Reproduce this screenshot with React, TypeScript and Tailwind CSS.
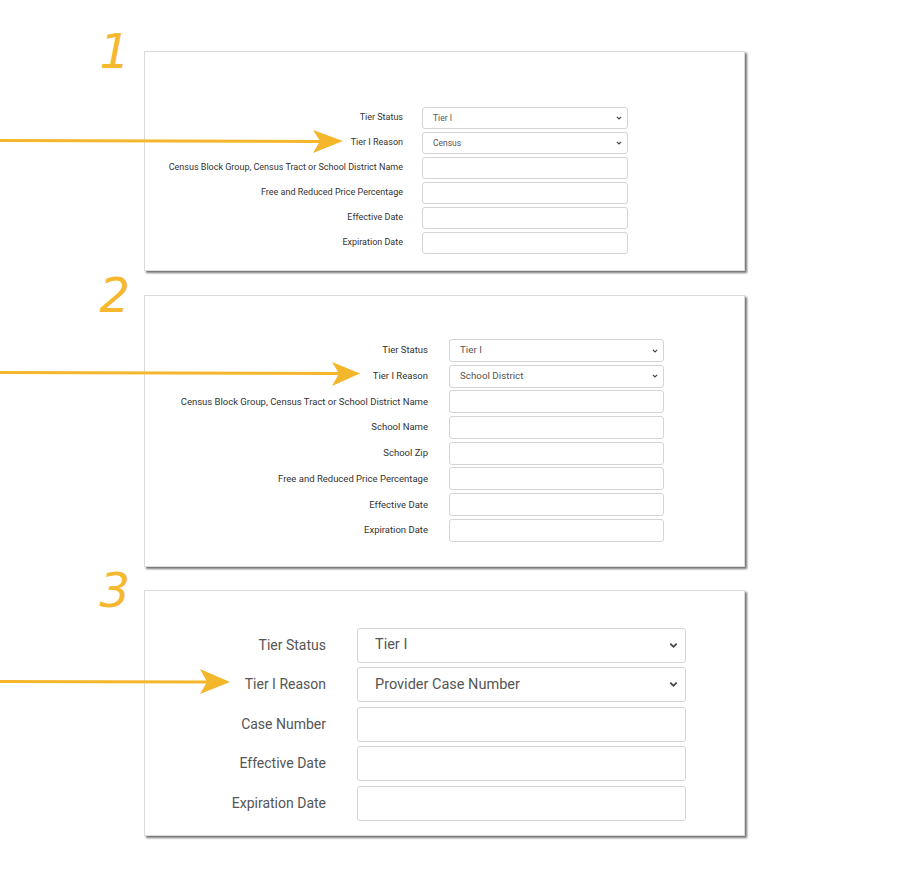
import React from "react";

type Row = { label: string; value?: string };

type PanelStyle = {
  section: string;
  panel: string;
  list: string;
  row: string;
  label: string;
  field: string;
  text: string;
  chevron: number;
};

const panels: { num: string; rows: Row[]; s: PanelStyle }[] = [
  {
    num: "1",
    rows: [
      { label: "Tier Status", value: "Tier I" },
      { label: "Tier I Reason", value: "Census" },
      { label: "Census Block Group, Census Tract or School District Name" },
      { label: "Free and Reduced Price Percentage" },
      { label: "Effective Date" },
      { label: "Expiration Date" },
    ],
    s: {
      section: "",
      panel: "pt-[55px] pb-[16px]",
      list: "gap-[3px]",
      row: "h-[22px] gap-[19px]",
      label: "w-[258px] text-[9px] text-[#333]",
      field: "w-[206px] pl-[10px] pr-[5px]",
      text: "text-[8.5px] text-[#555]",
      chevron: 6,
    },
  },
  {
    num: "2",
    rows: [
      { label: "Tier Status", value: "Tier I" },
      { label: "Tier I Reason", value: "School District" },
      { label: "Census Block Group, Census Tract or School District Name" },
      { label: "School Name" },
      { label: "School Zip" },
      { label: "Free and Reduced Price Percentage" },
      { label: "Effective Date" },
      { label: "Expiration Date" },
    ],
    s: {
      section: "mt-[24px]",
      panel: "pt-[43px] pb-[24px]",
      list: "gap-[2.7px]",
      row: "h-[23px] gap-[21px]",
      label: "w-[283px] text-[9.5px] text-[#333]",
      field: "w-[215px] pl-[10px] pr-[5px]",
      text: "text-[9.8px] text-[#555]",
      chevron: 6,
    },
  },
  {
    num: "3",
    rows: [
      { label: "Tier Status", value: "Tier I" },
      { label: "Tier I Reason", value: "Provider Case Number" },
      { label: "Case Number" },
      { label: "Effective Date" },
      { label: "Expiration Date" },
    ],
    s: {
      section: "mt-[23px]",
      panel: "pt-[37px] pb-[14px]",
      list: "gap-[4.5px]",
      row: "h-[35px] gap-[31px]",
      label: "w-[181px] text-[14px] text-[#555]",
      field: "w-[329px] pl-[17px] pr-[7px]",
      text: "text-[14.5px] text-[#555]",
      chevron: 9,
    },
  },
];

function Chevron({ size }: { size: number }) {
  return (
    <svg width={size} height={size} viewBox="0 0 10 10" className="shrink-0">
      <polyline points="1.5,3 5,6.5 8.5,3" fill="none" stroke="#444" strokeWidth="2" />
    </svg>
  );
}

function FormPanel({ num, rows, s }: { num: string; rows: Row[]; s: PanelStyle }) {
  return (
    <div className={`flex items-start ${s.section}`}>
      {/* hand-written step number */}
      <div className="w-[144px] shrink-0 flex justify-end pr-[14px]">
        <span className="-mt-[24px] text-[48px] leading-none italic font-medium text-[#f5b82e] font-['DejaVu_Sans',sans-serif]">
          {num}
        </span>
      </div>
      <div
        className={`w-[601px] bg-white border border-[#dadada] shadow-[2px_2px_2px_rgba(0,0,0,0.55)] ${s.panel}`}
      >
        <div className={`flex flex-col ${s.list}`}>
          {rows.map((r) => (
            <div key={r.label} className={`flex items-center ${s.row}`}>
              <div className={`text-right whitespace-nowrap ${s.label}`}>{r.label}</div>
              {r.value !== undefined ? (
                <div
                  className={`h-full flex items-center justify-between border border-[#d4d4d4] rounded-[3px] bg-white ${s.field}`}
                >
                  <span className={s.text}>{r.value}</span>
                  <Chevron size={s.chevron} />
                </div>
              ) : (
                <input
                  className={`h-full border border-[#d4d4d4] rounded-[3px] bg-white ${s.field}`}
                  readOnly
                />
              )}
            </div>
          ))}
        </div>
      </div>
    </div>
  );
}

export default function App() {
  return (
    <div className="relative w-[900px] h-[875px] bg-white font-['Roboto',sans-serif]">
      <div className="pt-[51px] flex flex-col">
        {panels.map((p) => (
          <FormPanel key={p.num} num={p.num} rows={p.rows} s={p.s} />
        ))}
      </div>

      {/* callout arrows */}
      <svg
        className="absolute inset-0 pointer-events-none"
        width="900"
        height="875"
        viewBox="0 0 900 875"
      >
        <g fill="#f4b72c" stroke="#f4b72c">
          <path d="M0 140.5 L320 141.5" strokeWidth="3" fill="none" />
          <path d="M313 130 L343 141 L313 153 L320 141 Z" stroke="none" />
          <path d="M0 372.5 L340 373.5" strokeWidth="3" fill="none" />
          <path d="M332 362 L360 373.5 L332 386 L339 373.5 Z" stroke="none" />
          <path d="M0 681.5 L208 682" strokeWidth="3" fill="none" />
          <path d="M200 669 L230 682 L200 694 L207 682 Z" stroke="none" />
        </g>
      </svg>
    </div>
  );
}
